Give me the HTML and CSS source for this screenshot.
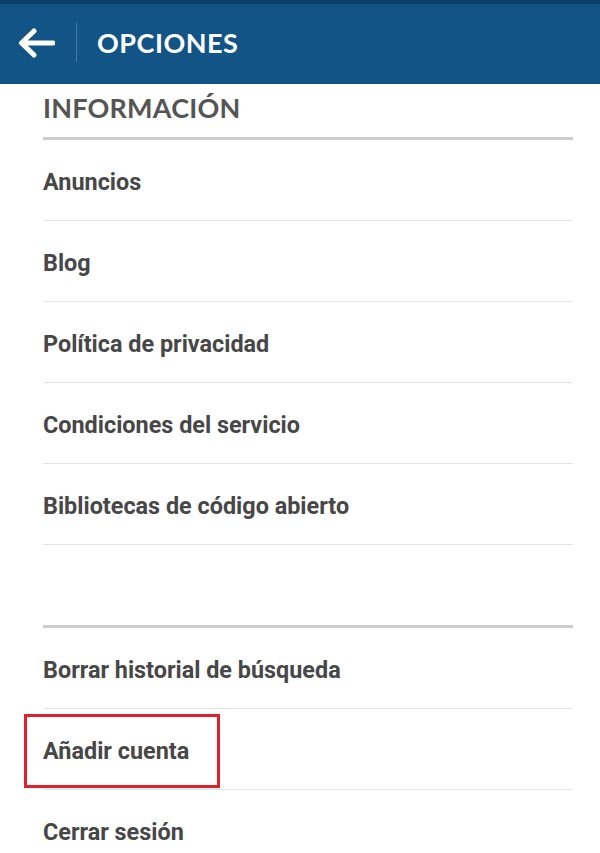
FILE: index.html
```html
<!DOCTYPE html>
<html lang="es">
<head>
<meta charset="utf-8">
<title>Opciones</title>
<link rel="stylesheet" href="styles.css">
</head>
<body>
<div class="statusbar"></div>
<header class="topbar">
  <svg class="back" width="38" height="32" viewBox="0 0 38 32" aria-hidden="true">
    <path d="M36 16 H5 M17 4 L4.5 16 L17 28" fill="none" stroke="#fff" stroke-width="5" stroke-linecap="round" stroke-linejoin="round"/>
  </svg>
  <div class="divider"></div>
  <h1 class="title">OPCIONES</h1>
</header>
<main class="content">
  <h2 class="section">INFORMACIÓN</h2>
  <ul class="list thick">
    <li class="row">Anuncios</li>
    <li class="row">Blog</li>
    <li class="row">Política de privacidad</li>
    <li class="row">Condiciones del servicio</li>
    <li class="row">Bibliotecas de código abierto</li>
  </ul>
  <div class="spacer"></div>
  <ul class="list thick">
    <li class="row">Borrar historial de búsqueda</li>
    <li class="row highlight">Añadir cuenta<span class="mark"></span></li>
    <li class="row last">Cerrar sesión</li>
  </ul>
</main>
</body>
</html>
```
FILE: styles.css
```css
html, body {
  margin: 0;
  padding: 0;
  background: #fff;
}
body {
  width: 600px;
  height: 853px;
  overflow: hidden;
  font-family: Roboto, "Liberation Sans", sans-serif;
}
.statusbar {
  height: 4px;
  background: #0e3d69;
}
.topbar {
  height: 80px;
  background: #135487;
  display: flex;
  align-items: center;
  box-sizing: border-box;
  padding-left: 17px;
}
.back {
  display: block;
  margin-top: -2px;
}
.divider {
  width: 1px;
  height: 39px;
  background: rgba(255, 255, 255, 0.22);
  margin-left: 21px;
  margin-top: -4px;
}
.title {
  margin: 0 0 0 20px;
  font-family: Lato, "Open Sans", sans-serif;
  font-weight: 700;
  font-size: 27px;
  letter-spacing: 0.5px;
  color: #fff;
  margin-top: -3px;
}
.content {
  padding: 0 27px 0 43px;
}
.section {
  margin: 0;
  height: 53px;
  box-sizing: border-box;
  padding-top: 9px;
  font-family: Lato, "Open Sans", sans-serif;
  font-weight: 700;
  font-size: 27px;
  line-height: 30px;
  letter-spacing: 0.2px;
  color: #555;
}
.list {
  list-style: none;
  margin: 0;
  padding: 0;
}
.list.thick {
  border-top: 3px solid #cdcdcd;
}
.row {
  position: relative;
  border-bottom: 1px solid #e4e4e4;
  display: flex;
  align-items: center;
  padding-top: 3px;
  height: 77px;
  font-size: 23.4px;
  font-weight: 700;
  color: #474747;
}
.row.last {
  border-bottom: none;
}
.spacer {
  height: 80px;
}
.mark {
  position: absolute;
  left: -19px;
  top: 5px;
  width: 196px;
  height: 74px;
  box-sizing: border-box;
  border: 3px solid #e1202c;
}
```
